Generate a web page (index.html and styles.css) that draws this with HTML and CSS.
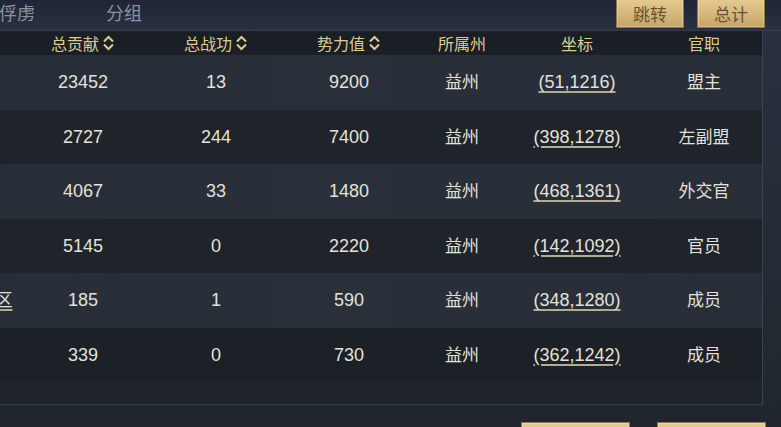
FILE: index.html
```html
<!DOCTYPE html>
<html lang="zh">
<head>
<meta charset="utf-8">
<link rel="stylesheet" href="styles.css">
</head>
<body>
<div class="screen">
  <div class="topbar">
    <div class="tabs">
      <span class="tab">俘虏</span>
      <span class="tab">分组</span>
    </div>
    <div class="actions">
      <button class="gbtn">跳转</button>
      <button class="gbtn">总计</button>
    </div>
  </div>

  <div class="panel">
    <div class="grid head">
      <div class="cell"></div>
      <div class="cell">总贡献<svg class="sort" viewBox="0 0 13 16"><path d="M2 6.5 L6.5 2 L11 6.5 M2 9.5 L6.5 14 L11 9.5"/></svg></div>
      <div class="cell">总战功<svg class="sort" viewBox="0 0 13 16"><path d="M2 6.5 L6.5 2 L11 6.5 M2 9.5 L6.5 14 L11 9.5"/></svg></div>
      <div class="cell">势力值<svg class="sort" viewBox="0 0 13 16"><path d="M2 6.5 L6.5 2 L11 6.5 M2 9.5 L6.5 14 L11 9.5"/></svg></div>
      <div class="cell">所属州</div>
      <div class="cell">坐标</div>
      <div class="cell">官职</div>
    </div>

    <div class="grid row odd">
      <div class="cell name"></div>
      <div class="cell">23452</div><div class="cell">13</div><div class="cell">9200</div>
      <div class="cell cjk">益州</div><div class="cell"><span class="coord">(51,1216)</span></div><div class="cell cjk">盟主</div>
    </div>
    <div class="grid row even">
      <div class="cell name"></div>
      <div class="cell">2727</div><div class="cell">244</div><div class="cell">7400</div>
      <div class="cell cjk">益州</div><div class="cell"><span class="coord">(398,1278)</span></div><div class="cell cjk">左副盟</div>
    </div>
    <div class="grid row odd">
      <div class="cell name"></div>
      <div class="cell">4067</div><div class="cell">33</div><div class="cell">1480</div>
      <div class="cell cjk">益州</div><div class="cell"><span class="coord">(468,1361)</span></div><div class="cell cjk">外交官</div>
    </div>
    <div class="grid row even">
      <div class="cell name"></div>
      <div class="cell">5145</div><div class="cell">0</div><div class="cell">2220</div>
      <div class="cell cjk">益州</div><div class="cell"><span class="coord">(142,1092)</span></div><div class="cell cjk">官员</div>
    </div>
    <div class="grid row odd">
      <div class="cell name cjk"><span class="coord">西城区</span></div>
      <div class="cell">185</div><div class="cell">1</div><div class="cell">590</div>
      <div class="cell cjk">益州</div><div class="cell"><span class="coord">(348,1280)</span></div><div class="cell cjk">成员</div>
    </div>
    <div class="grid row even last">
      <div class="cell name"></div>
      <div class="cell">339</div><div class="cell">0</div><div class="cell">730</div>
      <div class="cell cjk">益州</div><div class="cell"><span class="coord">(362,1242)</span></div><div class="cell cjk">成员</div>
    </div>
    <div class="panel-foot"></div>
  </div>

  <div class="bottom">
    <button class="gbtn wide"></button>
    <button class="gbtn wide"></button>
  </div>
</div>
</body>
</html>
```

FILE: styles.css
```css
html, body {
  margin: 0;
  padding: 0;
}
body {
  width: 781px;
  height: 427px;
  overflow: hidden;
  background: #232a31;
  font-family: "Liberation Sans", "Noto Sans CJK SC", sans-serif;
}
.screen {
  width: 781px;
  height: 427px;
  overflow: hidden;
  display: flex;
  flex-direction: column;
  background: linear-gradient(180deg, #1f2536 0px, #293140 30px, #252d38 200px, #20262c 427px);
}
.topbar {
  height: 30px;
  flex-shrink: 0;
  display: flex;
  justify-content: space-between;
  align-items: flex-start;
  border-bottom: 1px solid #343d4a;
}
.tabs {
  display: flex;
  gap: 72px;
}
.tab {
  font-family: "Noto Sans CJK SC", sans-serif;
  font-size: 18px;
  line-height: 24px;
  color: #8c929d;
  margin-left: -1px;
}
.actions {
  display: flex;
  gap: 13px;
  padding-right: 16px;
  margin-top: -3px;
}
.gbtn {
  width: 68px;
  height: 31px;
  border: 1px solid #8f7548;
  background: linear-gradient(180deg, #e6cc93 0%, #d5b77c 55%, #c4a466 100%);
  box-shadow: inset 0 0 0 1px rgba(255, 235, 180, 0.35);
  font-family: "Noto Sans CJK SC", sans-serif;
  font-size: 17px;
  color: #6a5233;
  padding: 2px 0 0;
  line-height: 24px;
}
.panel {
  flex-shrink: 0;
  margin-left: -117px;
  width: 879px;
  border-right: 1px solid #3a4451;
  border-bottom: 1px solid #35404b;
  background: #1e2329;
}
.grid {
  display: grid;
  grid-template-columns: 133.5px 133px 133px 133px 93px 137px 117px;
}
.cell {
  display: flex;
  align-items: center;
  justify-content: center;
  white-space: nowrap;
}
.head {
  height: 24px;
  background: #1a1e25;
  color: #dfcb92;
  font-family: "Noto Sans CJK SC", sans-serif;
  font-size: 16px;
}
.sort {
  width: 13px;
  height: 16px;
  margin-left: 3px;
  fill: none;
  stroke: #dfcb92;
  stroke-width: 2;
}
.row {
  box-sizing: border-box;
  height: 54.5px;
  padding-top: 1px;
  color: #e4e1d9;
  font-size: 18px;
}
.row .cjk {
  font-family: "Noto Sans CJK SC", sans-serif;
  font-size: 17px;
  padding-bottom: 4px;
}
.row .name {
  justify-content: flex-end;
  padding-right: 4px;
  overflow: hidden;
}
.odd {
  background: linear-gradient(90deg, #272d37 0%, #2a303a 50%, #282e38 100%);
}
.even {
  background: #1f232a;
}
.even.last {
  background: #1c2027;
}
.coord {
  text-decoration: underline;
  text-decoration-color: #b3ab96;
  text-decoration-thickness: 1.5px;
  text-underline-offset: 3px;
}
.panel-foot {
  height: 22px;
  background: #1f242a;
}
.bottom {
  display: flex;
  justify-content: flex-end;
  gap: 27px;
  padding: 17px 15px 0 0;
}
.gbtn.wide {
  width: 109px;
  height: 30px;
}
```
